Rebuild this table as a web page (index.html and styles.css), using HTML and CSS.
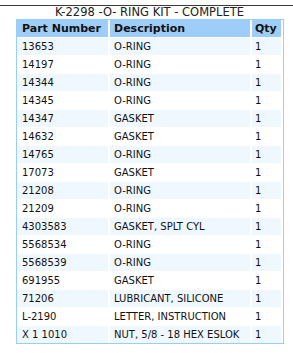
FILE: index.html
```html
<!DOCTYPE html>
<html>
<head>
<meta charset="utf-8">
<link rel="stylesheet" href="styles.css">
</head>
<body>
<div class="rule"></div>
<div class="kit">
  <div class="kit-title">K-2298 -O- RING KIT - COMPLETE</div>
  <table class="parts">
    <thead>
      <tr><th class="c-part">Part Number</th><th class="c-desc">Description</th><th class="c-qty">Qty</th></tr>
    </thead>
    <tbody>
      <tr class="alt"><td>13653</td><td>O-RING</td><td>1</td></tr>
      <tr><td>14197</td><td>O-RING</td><td>1</td></tr>
      <tr class="alt"><td>14344</td><td>O-RING</td><td>1</td></tr>
      <tr><td>14345</td><td>O-RING</td><td>1</td></tr>
      <tr class="alt"><td>14347</td><td>GASKET</td><td>1</td></tr>
      <tr><td>14632</td><td>GASKET</td><td>1</td></tr>
      <tr class="alt"><td>14765</td><td>O-RING</td><td>1</td></tr>
      <tr><td>17073</td><td>GASKET</td><td>1</td></tr>
      <tr class="alt"><td>21208</td><td>O-RING</td><td>1</td></tr>
      <tr><td>21209</td><td>O-RING</td><td>1</td></tr>
      <tr class="alt"><td>4303583</td><td>GASKET, SPLT CYL</td><td>1</td></tr>
      <tr><td>5568534</td><td>O-RING</td><td>1</td></tr>
      <tr class="alt"><td>5568539</td><td>O-RING</td><td>1</td></tr>
      <tr><td>691955</td><td>GASKET</td><td>1</td></tr>
      <tr class="alt"><td>71206</td><td>LUBRICANT, SILICONE</td><td>1</td></tr>
      <tr><td>L-2190</td><td>LETTER, INSTRUCTION</td><td>1</td></tr>
      <tr class="alt"><td>X 1 1010</td><td>NUT, 5/8 - 18 HEX ESLOK</td><td>1</td></tr>
    </tbody>
  </table>
</div>
</body>
</html>
```

FILE: styles.css
```css
html, body {
  margin: 0;
  padding: 0;
  background: #fff;
  font-family: "DejaVu Sans", Verdana, sans-serif;
  color: #111;
}
.rule {
  margin-top: 5px;
  border-top: 1px solid #3a3a3a;
  width: 100%;
}
.kit {
  margin-left: 16px;
  width: 267px;
}
.kit-title {
  text-align: center;
  font-size: 11.5px;
  line-height: 13px;
  color: #222;
  white-space: nowrap;
}
.parts {
  border-collapse: separate;
  border-spacing: 0;
  border: 1px solid #99ccff;
  width: 267px;
  table-layout: fixed;
}
.parts th, .parts td {
  border-right: 2px solid #fff;
  border-bottom: 1px solid #fff;
  padding: 0 0 0 5px;
  text-align: left;
  white-space: nowrap;
  overflow: hidden;
  vertical-align: middle;
}
.parts th {
  background: #9fcdf9;
  font-weight: bold;
  font-size: 11px;
  height: 17px;
  color: #111;
}
.parts td {
  font-size: 10px;
  height: 17px;
  color: #111;
}
.parts tbody tr:last-child td {
  border-bottom: 0;
}
.parts tr.alt td {
  background: #eff8ff;
}
.c-part { width: 86px; }
.c-desc { width: 136px; padding-left: 4px !important; }
.c-qty { width: 26px; padding-left: 3px !important; }
.parts td:nth-child(2) { padding-left: 4px; }
.parts td:nth-child(3) { padding-left: 3px; }
```
